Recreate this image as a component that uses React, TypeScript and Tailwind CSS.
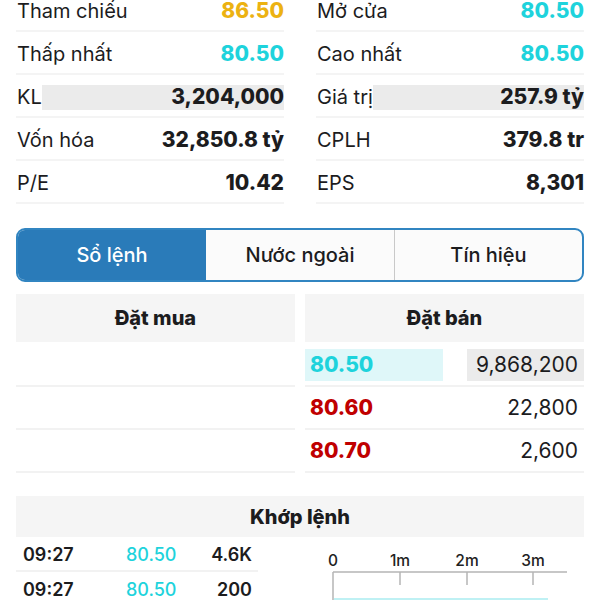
const cyan = 'text-[#1ed3dc]'

interface Stat {
  label: string
  value: string
  color?: string
  shaded?: boolean
}

const left: Stat[] = [
  { label: 'Tham chiếu', value: '86.50', color: 'text-[#ecb212]' },
  { label: 'Thấp nhất', value: '80.50', color: cyan },
  { label: 'KL', value: '3,204,000', shaded: true },
  { label: 'Vốn hóa', value: '32,850.8 tỷ' },
  { label: 'P/E', value: '10.42' },
]

const right: Stat[] = [
  { label: 'Mở cửa', value: '80.50', color: cyan },
  { label: 'Cao nhất', value: '80.50', color: cyan },
  { label: 'Giá trị', value: '257.9 tỷ', shaded: true },
  { label: 'CPLH', value: '379.8 tr' },
  { label: 'EPS', value: '8,301' },
]

const asks = [
  { price: '80.50', vol: '9,868,200', best: true },
  { price: '80.60', vol: '22,800' },
  { price: '80.70', vol: '2,600' },
]

const trades = [
  { time: '09:27', price: '80.50', vol: '4.6K' },
  { time: '09:27', price: '80.50', vol: '200' },
]

function StatColumn({ items }: { items: Stat[] }) {
  return (
    <div className="flex flex-col">
      {items.map((s) => (
        <div key={s.label} className="flex h-[43px] items-center border-b-2 border-[#f4f4f4] pl-[1px] pt-[3px]">
          <span className="text-[20px] text-[#1c1c1e]">{s.label}</span>
          <span
            className={`flex h-[25px] flex-1 items-center justify-end text-[21px] font-extrabold ${s.color ?? 'text-[#1c1c1e]'} ${s.shaded ? 'bg-[#ebebeb]' : ''}`}
          >
            {s.value}
          </span>
        </div>
      ))}
    </div>
  )
}

function TickChart() {
  return (
    <svg width="279" height="63" viewBox="0 0 279 63" className="block">
      {[
        { x: 28, t: '0' },
        { x: 95, t: '1m' },
        { x: 162, t: '2m' },
        { x: 228, t: '3m' },
      ].map((l) => (
        <text key={l.t} x={l.x} y={29} textAnchor="middle" fontSize="15.5" fontWeight="500" fill="#222" fontFamily="Inter, sans-serif">
          {l.t}
        </text>
      ))}
      <line x1="28" y1="35" x2="262" y2="35" stroke="#b5b5b5" strokeWidth="1.5" />
      <line x1="28" y1="35" x2="28" y2="63" stroke="#b5b5b5" strokeWidth="1.5" />
      {[95, 162, 228].map((x) => (
        <line key={x} x1={x} y1="35" x2={x} y2="48" stroke="#b5b5b5" strokeWidth="1.5" />
      ))}
      <rect x="29" y="61" width="214" height="4" fill="#bff1f4" />
    </svg>
  )
}

export default function App() {
  return (
    <div className="h-[600px] w-[600px] overflow-hidden bg-white px-4 font-['Inter',sans-serif] text-[#1c1c1e]">
      {/* Stock summary */}
      <div className="mt-[-11px] grid grid-cols-2 gap-8">
        <StatColumn items={left} />
        <StatColumn items={right} />
      </div>

      {/* Tabs */}
      <div className="mt-[24px] flex h-[54px] overflow-hidden rounded-[9px] border-2 border-[#3185c1] bg-[#fbfbfb]">
        <div className="flex w-[188px] items-center justify-center bg-[#2a7bb9] text-[20px] font-medium text-white">Sổ lệnh</div>
        <div className="flex w-[189px] items-center justify-center border-r border-[#c9c9c9] text-[20px] font-medium">Nước ngoài</div>
        <div className="flex flex-1 items-center justify-center text-[20px] font-medium">Tín hiệu</div>
      </div>

      {/* Order book */}
      <div className="mt-[12px] grid grid-cols-2 gap-[10px]">
        <div className="flex flex-col">
          <div className="flex h-[48px] items-center justify-center bg-[#f5f5f5] text-[20px] font-extrabold">Đặt mua</div>
          <div className="h-[2px]" />
          {asks.map((a) => (
            <div key={a.price} className="h-[43px] border-b-2 border-[#f2f2f2]" />
          ))}
        </div>
        <div className="flex flex-col">
          <div className="flex h-[48px] items-center justify-center bg-[#f5f5f5] text-[20px] font-extrabold">Đặt bán</div>
          <div className="h-[2px]" />
          {asks.map((a) => (
            <div key={a.price} className="flex h-[43px] items-center gap-6 border-b-2 border-[#f2f2f2]">
              <span
                className={`flex h-[32px] w-[138px] items-center pl-[5px] text-[21px] font-extrabold ${a.best ? 'bg-[#dff7f9] text-[#1ed3dc]' : 'text-[#c00000]'}`}
              >
                {a.price}
              </span>
              <span
                className={`flex h-[32px] flex-1 items-center justify-end pr-[6px] text-[21px] ${a.best ? 'bg-[#ebebeb]' : ''}`}
              >
                {a.vol}
              </span>
            </div>
          ))}
        </div>
      </div>

      {/* Matched orders */}
      <div className="mt-[23px] flex h-[41px] items-center justify-center bg-[#f5f5f5] text-[20px] font-extrabold">Khớp lệnh</div>
      <div className="flex">
        <div className="flex w-[242px] flex-col">
          {trades.map((t, i) => (
            <div key={i} className="flex h-[35px] items-center border-b-2 border-[#f2f2f2] pl-[7px] pr-[6px] pt-[2px] text-[18px] font-semibold">
              <span className="w-[103px]">{t.time}</span>
              <span className={`w-[60px] font-medium ${cyan}`}>{t.price}</span>
              <span className="flex-1 text-right">{t.vol}</span>
            </div>
          ))}
        </div>
        <div className="ml-[47px]">
          <TickChart />
        </div>
      </div>
    </div>
  )
}
